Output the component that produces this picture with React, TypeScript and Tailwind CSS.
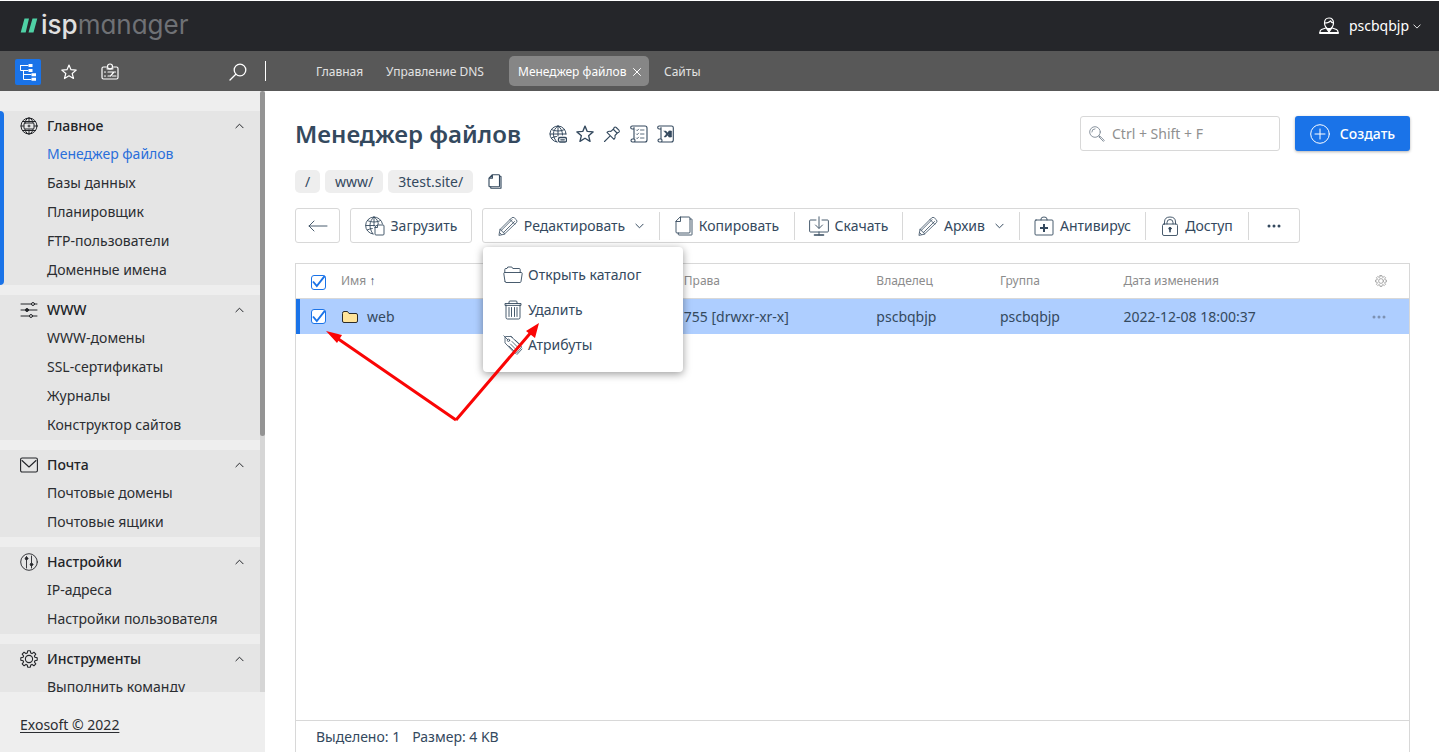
import type { ReactNode } from "react";

type IconProps = { children: ReactNode; box: string; className?: string; weight?: number };

function Icon({ children, box, className = "", weight = 1 }: IconProps) {
  return (
    <svg
      viewBox={box}
      className={"shrink-0 " + className}
      fill="none"
      stroke="currentColor"
      strokeWidth={weight}
      strokeLinecap="round"
      strokeLinejoin="round"
      aria-hidden="true"
    >
      {children}
    </svg>
  );
}

const TreeIcon = () => (
  <Icon box="0 0 18 18" className="size-[18px]">
    <path d="M1.500 2.500H9M1.500 2.500v5H9M4.500 7.500v9H12M4.500 11.500H12" />
    <path d="M9.500 1h4v3h-4zM9.500 6h4v3h-4zM12.500 10.200h4.500v3h-4.500zM12.500 14.700h4.500v3h-4.500z" fill="currentColor" stroke="none" />
  </Icon>
);

const StarIcon = ({ className }: { className: string }) => (
  <Icon box="0 0 16 16" className={className} weight={1.2}>
    <path d="M8 1l2 4.700 5.200.4-4 3.400 1.300 5L8 11.800l-4.500 2.700 1.300-5-4-3.400 5.200-.4z" />
  </Icon>
);

const BoardIcon = () => (
  <Icon box="0 0 18 18" className="size-[18px]" weight={1.2}>
    <path d="M5.500 4H2.500Q1 4 1 5.500v9Q1 16 2.500 16h13q1.500 0 1.500-1.500v-9Q17 4 15.500 4h-3" />
    <path d="M6 5.800h6" />
    <circle cx="9" cy="3.500" r="2.500" />
    <path d="M3.500 9h1M7 9h7.500M3.500 13h1M7 13h2.500M11.500 13H15M9.500 13l3-3.500" />
  </Icon>
);

const SearchIcon = ({ className }: { className: string }) => (
  <Icon box="0 0 18 18" className={className} weight={1.3}>
    <circle cx="11" cy="7" r="5.800" />
    <path d="M6.800 11.200L1 17" />
  </Icon>
);

const FinderIcon = () => (
  <Icon box="0 0 16 16" className="size-4" weight={0.9}>
    <circle cx="6" cy="6" r="5.300" />
    <path d="M2.800 6A3.200 3.200 0 0 1 6 2.800M9.800 9.800l1.200 1.200M11 10.200l4.300 4.200-.9 1-4.300-4.300z" />
  </Icon>
);

const UserIcon = () => (
  <Icon box="0 0 20 18" className="h-[18px] w-5" weight={1.2}>
    <path d="M10 1C7 1 5.500 3 5.500 6c0 3 2 6 4.500 6s4.500-3 4.500-6c0-3-1.500-5-4.500-5z" />
    <path d="M5.500 6C8 6 10.500 5.200 11.500 3.800 12 5 13 6 14.500 6M7.500 10.800L2.500 12.500Q1 13.200 1 15v1h18v-1q0-1.800-1.500-2.500l-5-1.700" />
    <path d="M1 16h18" strokeWidth="1.800" />
    <path d="M7.500 11.500L10 15l2.500-3.500z" fill="currentColor" />
  </Icon>
);

const Chevron = ({ up = false, className }: { up?: boolean; className: string }) => (
  <Icon box="0 0 10 6" className={className} weight={1.1}>
    {up ? <path d="M1 5l4-4 4 4" /> : <path d="M1 1l4 4 4-4" />}
  </Icon>
);

const GlobeDeskIcon = () => (
  <Icon box="0 0 18 18" className="size-[18px]">
    <circle cx="9" cy="9" r="8" />
    <ellipse cx="9" cy="9" rx="4.500" ry="8" />
    <path d="M2.500 4.500h13M2.500 13.500h13M9 1v4M9 13v4M1 9h2.500M14.500 9H17" />
    <rect x="4" y="6" width="10" height="6" rx="1" fill="#e5e5e5" />
    <path d="M9 8v2M8 9h2" />
  </Icon>
);

const SlidersIcon = () => (
  <Icon box="0 0 18 18" className="size-[18px]">
    <path d="M1 3h10.500M14.500 3H17M1 9h16M1 15h8.500M12.500 15H17" />
    <circle cx="13" cy="3" r="1.500" />
    <circle cx="7" cy="9" r="1.500" fill="currentColor" />
    <circle cx="11" cy="15" r="1.500" />
  </Icon>
);

const MailIcon = () => (
  <Icon box="0 0 18 18" className="size-[18px]" weight={1.1}>
    <rect x="0.600" y="2" width="16.800" height="14" rx="1.500" />
    <path d="M2 4.500L9 11l7-6.500" />
  </Icon>
);

const TuneIcon = () => (
  <Icon box="0 0 18 18" className="size-[18px]" weight={0.9}>
    <circle cx="9" cy="9" r="8.300" />
    <path d="M6.500 3.500v11.500M11.500 3v7M11.500 12.500v2.500" />
    <circle cx="6.500" cy="5.500" r="1.300" fill="currentColor" />
    <circle cx="11.500" cy="11.500" r="1.300" fill="currentColor" />
  </Icon>
);

const GearIcon = ({ className }: { className: string }) => (
  <Icon box="0 0 18 18" className={className} weight={1.1}>
    <path d="M7.700.800h2.600l.5 2.300 1.200.5 1.900-1.400 1.900 1.900-1.400 1.900.5 1.200 2.300.5v2.600l-2.300.5-.5 1.200 1.400 1.900-1.900 1.900-1.900-1.400-1.200.5-.5 2.300H7.700l-.5-2.300-1.200-.5-1.900 1.400-1.900-1.900L3.600 12l-.5-1.200-2.300-.5V7.700l2.300-.5.5-1.200-1.400-1.900 1.900-1.900L6 3.600l1.200-.5z" />
    <circle cx="9" cy="9" r="3.600" />
  </Icon>
);

const GlobeLinkIcon = () => (
  <Icon box="0 0 18 18" className="size-[18px]">
    <path d="M8 17A8 8 0 1 1 17 9M9 1C3 5 3 12 8 17M9 1c3 2 4.500 5 4.500 9M9 1v10M1 9h16M2.500 4.500C6 6.500 12 6.500 15.500 4.500M2.500 13q2.500-1.500 5-1.500" />
    <rect x="9.500" y="12.500" width="8" height="4.500" rx="1.500" strokeWidth="1.300" />
    <path d="M11.800 14.800h3.500" strokeWidth="1.300" />
  </Icon>
);

const PinIcon = () => (
  <Icon box="0 0 18 18" className="size-[18px]" weight={1.1}>
    <path d="M11.200 2.500q1-1 2 0l2.700 2.700q1 1 0 2l-1.200.5-2.700 2.800q.6 2.500-1 3.900L4 7.400q1.400-1.600 3.900-1l2.600-2.400zM7.200 10.800l-5.700 5.700" />
    <path d="M10.500 4.500l3.500 3.500" />
  </Icon>
);

const ScrollIcon = () => (
  <Icon box="0 0 18 18" className="size-[18px]" weight={1.1}>
    <path d="M4 14V2.500M3.800 4H2.200a1.500 1.500 0 1 1 0-3H15q2 0 2 2v12q0 2-2 2H2.500a1.500 1.500 0 1 1 0-3H4q1 0 1 1.500T4 17" />
    <path d="M6.500 5l.7.700 1.300-1.500M10.500 5H14M6.500 9l.7.700 1.300-1.500M10.500 9H14M6.500 13l.7.700 1.300-1.500M10.500 13H14" strokeWidth="0.800" />
  </Icon>
);

const ExcelIcon = () => (
  <Icon box="0 0 18 18" className="size-[18px]" weight={1.1}>
    <path d="M4 14V2.500M3.800 4H2.200a1.500 1.500 0 1 1 0-3H14.500q1.800 0 1.800 1.800V15q0 2-2 2H2.500a1.500 1.500 0 1 1 0-3H4q1 0 1 1.500T4 17" />
    <path d="M7 6h2l1.400 1.700L12 6h2l-2.600 3L14 12h-2l-1.600-1.700L9 12H7l2.400-3zM12 6h2.700v6H12" fill="currentColor" strokeWidth="0.400" />
  </Icon>
);

const CopyIcon = ({ className, weight = 0.9 }: { className: string; weight?: number }) => (
  <Icon box="0 0 18 20" className={className} weight={weight}>
    <path d="M5.500 1H14q1 0 1 1v14q0 1-1 1H2q-1 0-1-1V5.500zM5.500 1v4.500H1" />
    <path d="M15 3h1.500q.5 0 .5.500v15q0 .5-.5.500H4q-.7 0-.7-.7V17" />
  </Icon>
);

const BackIcon = () => (
  <Icon box="0 0 20 12" className="h-3 w-5" weight={0.9}>
    <path d="M1 6h18M6 1L1 6l5 5" />
  </Icon>
);

const UploadIcon = () => (
  <Icon box="0 0 20 20" className="size-5" weight={0.9}>
    <path d="M8 18A8.500 8.500 0 1 1 17.500 8M9 1C4 5 3.500 12 8 18M9 1c3 2 4 4 4.300 7M9 1v9M.8 9.500H10M2.500 4.500C6 6.500 12 6.500 15.500 4.500M2.300 14q2.700-1.500 5-1.500" />
    <path d="M12.500 9H18q1 0 1 1v8q0 1-1 1h-7q-1 0-1-1v-6.500zM12.500 9v2.500H10" />
  </Icon>
);

const PencilIcon = () => (
  <Icon box="0 0 20 20" className="size-5" weight={0.8}>
    <path d="M1 19l1-5.500L13.500 2q1.500-1.500 3 0L18.300 3.700q1.400 1.500 0 3L6.500 18zM2 13.500l1.500.7.700 1.500 1.500.6.800 1.700M3.500 14.200L14 3.700M5.700 16.300L16.500 5.500M12 3.500l4.700 4.700M1.700 16.700l1.600 1.600" />
  </Icon>
);

const DownloadIcon = () => (
  <Icon box="0 0 20 20" className="size-5" weight={0.9}>
    <path d="M7 4H1.500Q.6 4 .6 5v10q0 1 .9 1h17q.9 0 .9-1V5q0-1-.9-1H13M10 .8V12M6.500 9l3.500 3.500L13.500 9M10 16v3" />
    <path d="M5.500 19h9" strokeWidth="1.600" />
  </Icon>
);

const MedkitIcon = () => (
  <Icon box="0 0 20 20" className="size-5" weight={0.9}>
    <path d="M7 4V3q0-2 3-2t3 2v1" />
    <rect x="1" y="4" width="18" height="15" rx="1" />
    <path d="M10 8v8M6 12h8" strokeWidth="2" strokeLinecap="butt" />
  </Icon>
);

const LockIcon = () => (
  <Icon box="0 0 18 20" className="h-5 w-[18px]" weight={0.9}>
    <rect x="1.500" y="8" width="15" height="11.500" rx="1.500" />
    <path d="M3.500 8V6q0-5 5.500-5t5.500 5v2M6 8V6.500Q6 3.500 9 3.500t3 3V8" />
    <path d="M9 12.500v3.200" strokeWidth="1.600" />
    <circle cx="9" cy="12.500" r="1.200" fill="currentColor" />
  </Icon>
);

const OpenFolderIcon = () => (
  <Icon box="0 0 20 18" className="h-[18px] w-5" weight={0.9}>
    <path d="M2 15.500L.8 7.500q0-1 1-1h16.400q1 0 1 1L18 15.500q-.2 1-1 1H3q-.8 0-1-1M1.800 6.500V3.500q0-1 1-1H4l.8-1.500h4l1 1.500h6.400q1 0 1 1v3" />
  </Icon>
);

const TrashIcon = () => (
  <Icon box="0 0 18 20" className="h-5 w-[18px]" weight={0.9}>
    <path d="M1 5V3.500h16V5zM5 3.500V2q0-1 1-1h6q1 0 1 1v1.500M2 5v12.500Q2 19 3.500 19h11q1.500 0 1.500-1.500V5M5 7.500v9M7.500 7.500v9M10.500 7.500v9M13 7.500v9" />
  </Icon>
);

const TagIcon = () => (
  <Icon box="0 0 20 20" className="size-5" weight={0.8}>
    <path d="M.8.800l4 4M2 7.500V2.500q0-1 1-1h5L18 11q1 1 0 2l-4.500 5q-1 1-2 0zM8 1.500l1.500 1" />
    <circle cx="5.500" cy="5.300" r="1.200" />
    <path d="M9 6.500l5.500 5.500M7.500 9l5 5M6 11l5 5M12 5l5.500 5M19 14l-5 5.500" />
  </Icon>
);

const PlusCircleIcon = () => (
  <Icon box="0 0 20 20" className="size-5">
    <circle cx="10" cy="10" r="9.300" />
    <path d="M10 5v10M5 10h10" />
  </Icon>
);

const FolderIcon = () => (
  <svg viewBox="0 0 18 16" className="h-4 w-[18px] shrink-0" fill="#ffe49b" stroke="#2b2b2b" strokeWidth="1" aria-hidden="true">
    <path d="M1.500 4.500q0-2 1.500-2h3.500l1.500 2h7q1.500 0 1.500 1.500v6q0 1.500-1.500 1.500H3q-1.500 0-1.500-1.500z" />
  </svg>
);

const Dots = () => (
  <svg viewBox="0 0 16 4" className="h-1 w-4" fill="currentColor" aria-hidden="true">
    <circle cx="3" cy="2" r="1.500" />
    <circle cx="8" cy="2" r="1.500" />
    <circle cx="13" cy="2" r="1.500" />
  </svg>
);

const sections = [
  { title: "Главное", icon: <GlobeDeskIcon />, active: true, items: ["Менеджер файлов", "Базы данных", "Планировщик", "FTP-пользователи", "Доменные имена"] },
  { title: "WWW", icon: <SlidersIcon />, active: false, items: ["WWW-домены", "SSL-сертификаты", "Журналы", "Конструктор сайтов"] },
  { title: "Почта", icon: <MailIcon />, active: false, items: ["Почтовые домены", "Почтовые ящики"] },
  { title: "Настройки", icon: <TuneIcon />, active: false, items: ["IP-адреса", "Настройки пользователя"] },
  { title: "Инструменты", icon: <GearIcon className="size-[18px]" />, active: false, items: ["Выполнить команду"] },
];

function Sidebar() {
  return (
    <aside className="flex w-[265px] shrink-0 flex-col bg-[#eeeeee] text-[#2b2d31]">
      <div className="flex min-h-0 flex-1">
        <nav className="flex flex-1 flex-col gap-2.5 overflow-hidden pt-5">
          {sections.map((s) => (
            <section key={s.title} className="flex shrink-0 bg-[#e5e5e5]">
              <span className={s.active ? "w-1 rounded-r bg-[#1a73e8]" : "w-1"} />
              <div className="flex-1 pb-px pl-4">
                <button className="flex h-7 w-full items-center pr-4 pt-px text-left font-medium text-[#222428]">
                  <span className="w-[27px]">{s.icon}</span>
                  <span className="flex-1">{s.title}</span>
                  <Chevron up className="h-[6px] w-[9px]" />
                </button>
                <ul>
                  {s.items.map((item, i) => (
                    <li key={item} className="flex h-[29px] items-center pl-[27px]">
                      <a href="#" className={s.active && i === 0 ? "text-[#2a6fdb]" : ""}>{item}</a>
                    </li>
                  ))}
                </ul>
              </div>
            </section>
          ))}
        </nav>
        <div className="w-[5px] bg-[#d6d6d6]">
          <div className="h-[57.4%] rounded-full bg-[#949494]" />
        </div>
      </div>
      <div className="flex h-[60px] items-center px-5 pt-1.5">
        <a href="#" className="underline underline-offset-2">Exosoft © 2022</a>
      </div>
    </aside>
  );
}

function Tick({ label }: { label: string }) {
  return (
    <span className="grid size-4 place-items-center">
      <input type="checkbox" aria-label={label} defaultChecked className="peer col-start-1 row-start-1 size-[15px] appearance-none rounded-[3px] border border-[#1a73e8] bg-white" />
      <svg viewBox="0 0 16 16" className="pointer-events-none invisible col-start-1 row-start-1 size-4 peer-checked:visible" fill="none" stroke="#1a73e8" strokeWidth="1.900" aria-hidden="true">
        <path d="M3 7.500l3.800 4.500L14.800 1.800" />
      </svg>
    </span>
  );
}

const tool = "flex h-full items-center justify-center gap-1.5";

function Toolbar() {
  return (
    <div className="mt-[15px] flex h-[35px] gap-2.5 text-[#34495e]">
      <button aria-label="Назад" className="flex w-[45px] items-center justify-center rounded-[3px] border border-[#d8d8d8]">
        <BackIcon />
      </button>
      <button className="flex w-[122px] items-center justify-center gap-1.5 rounded-[3px] border border-[#d8d8d8]">
        <UploadIcon />
        Загрузить
      </button>
      <div className="flex items-center rounded-[3px] border border-[#d8d8d8]">
        <div className="relative h-full">
          <button className={tool + " w-[176px]"}>
            <PencilIcon />
            Редактировать
            <Chevron className="ml-1 h-[6px] w-[9px]" />
          </button>
          <ul className="absolute left-0 top-full z-10 mt-[5px] w-[200px] rounded bg-white px-5 py-2.5 shadow-[0_2px_8px_rgba(0,0,0,0.4)]">
            <li><button className="flex h-[35px] w-full items-center gap-[5px]"><OpenFolderIcon />Открыть каталог</button></li>
            <li><button className="flex h-[35px] w-full items-center gap-[5px]"><span className="flex w-5 justify-center"><TrashIcon /></span>Удалить</button></li>
            <li><button className="flex h-[35px] w-full items-center gap-[5px]"><TagIcon />Атрибуты</button></li>
          </ul>
        </div>
        <span className="h-7 w-px bg-[#d8d8d8]" />
        <button className={tool + " w-[134px]"}><CopyIcon className="h-5 w-[18px]" />Копировать</button>
        <span className="h-7 w-px bg-[#d8d8d8]" />
        <button className={tool + " w-[107px]"}><DownloadIcon />Скачать</button>
        <span className="h-7 w-px bg-[#d8d8d8]" />
        <button className={tool + " w-[116px]"}><PencilIcon />Архив<Chevron className="ml-1 h-[6px] w-[9px]" /></button>
        <span className="h-7 w-px bg-[#d8d8d8]" />
        <button className={tool + " w-[125px]"}><MedkitIcon />Антивирус</button>
        <span className="h-7 w-px bg-[#d8d8d8]" />
        <button className={tool + " w-[102px]"}><LockIcon />Доступ</button>
        <span className="h-7 w-px bg-[#d8d8d8]" />
        <button aria-label="Ещё" className={tool + " w-[50px]"}><Dots /></button>
      </div>
    </div>
  );
}

function FileTable() {
  return (
    <div className="mt-5 flex min-h-0 flex-1 flex-col border border-b-0 border-[#d8d8d8]">
      <div className="flex-1">
        <table className="w-full table-fixed border-separate border-spacing-0 text-left">
          <colgroup>
            <col className="w-[45px]" />
            <col className="w-[30.8%]" />
            <col className="w-[17.3%]" />
            <col className="w-[11.1%]" />
            <col className="w-[11.1%]" />
            <col />
            <col className="w-[56px]" />
          </colgroup>
          <thead className="text-[12px] text-[#8c8c8c] [&_th]:border-b [&_th]:border-[#d8d8d8]">
            <tr className="h-[35px]">
              <th className="pl-3.5 pt-0.5"><Tick label="Выбрать все" /></th>
              <th className="font-normal">Имя <span className="text-[#34495e]">↑</span></th>
              <th className="font-normal">Права</th>
              <th className="font-normal">Владелец</th>
              <th className="font-normal">Группа</th>
              <th className="font-normal">Дата изменения</th>
              <th><button aria-label="Настройка таблицы" className="flex w-full justify-center"><GearIcon className="size-3" /></button></th>
            </tr>
          </thead>
          <tbody className="text-[#34495e]">
            <tr className="h-[35px] bg-[#aeceff]">
              <td className="border-l-4 border-[#1a73e8] pl-2.5"><Tick label="Выбрать web" /></td>
              <td><a href="#" className="flex items-center gap-2"><FolderIcon />web</a></td>
              <td>755 [drwxr-xr-x]</td>
              <td>pscbqbjp</td>
              <td>pscbqbjp</td>
              <td>2022-12-08 18:00:37</td>
              <td><button aria-label="Действия" className="flex w-full justify-center pr-1 text-[#7d92b3]"><Dots /></button></td>
            </tr>
          </tbody>
        </table>
      </div>
      <div className="flex h-8 shrink-0 items-center gap-3 border-t border-[#d8d8d8] px-5 text-[#34495e]">
        <span>Выделено: 1</span>
        <span>Размер: 4 KB</span>
      </div>
    </div>
  );
}

export default function App() {
  return (
    <div className="flex h-screen flex-col overflow-hidden bg-white pt-px font-['Noto_Sans','Open_Sans',sans-serif] text-[14px] leading-5">
      <header className="flex h-[50px] shrink-0 items-center justify-between bg-[#25262a] pl-5 pr-[18px]">
        <a href="#" className="flex items-center gap-[3px] pb-0.5 font-['Inter',sans-serif] text-[26px] leading-8 [font-feature-settings:'cv11']">
          <svg viewBox="0 0 18 16" className="h-4 w-[18px]" fill="#4fd1a5" aria-hidden="true">
            <path d="M4.500 1.500H9L5.700 15.500H.7zM12.500 1.500H17.300L13.500 15.500H8.500z" />
          </svg>
          <span><span className="font-medium text-[#e0e0e0]">isp</span><span className="font-normal text-[#6f7175]">manager</span></span>
        </a>
        <button className="flex items-center text-white">
          <UserIcon />
          <span className="ml-2.5">pscbqbjp</span>
          <Chevron className="ml-1 h-[5px] w-[8px]" />
        </button>
      </header>

      <div className="flex h-10 shrink-0 items-center bg-[#585858] text-white">
        <div className="flex w-[265px] items-center pl-[15px] pt-px">
          <button aria-label="Меню" className="flex size-[26px] items-center justify-center rounded-[2px] bg-[#1a73e8]"><TreeIcon /></button>
          <button aria-label="Избранное" className="ml-5"><StarIcon className="size-4" /></button>
          <button aria-label="Панель" className="ml-6"><BoardIcon /></button>
          <button aria-label="Поиск" className="ml-auto mr-[18px]"><SearchIcon className="size-[18px]" /></button>
        </div>
        <span className="h-5 w-px bg-white" />
        <nav className="flex items-center pl-[50px] text-[12px] text-[#e2e2e2]">
          <a href="#" className="w-[70px] pt-0.5">Главная</a>
          <a href="#" className="w-[123px] pt-0.5">Управление DNS</a>
          <span className="flex h-[30px] w-[140px] items-center justify-between rounded-[5px] bg-[#868686] pl-[9px] pr-2 pt-0.5 text-white">
            <a href="#">Менеджер файлов</a>
            <button aria-label="Закрыть">
              <Icon box="0 0 8 8" className="size-2"><path d="M.5.500l7 7M7.500.500l-7 7" /></Icon>
            </button>
          </span>
          <a href="#" className="ml-[15px] pt-0.5">Сайты</a>
        </nav>
      </div>

      <div className="flex min-h-0 flex-1">
        <Sidebar />
        <main className="relative flex min-w-0 flex-1 flex-col pl-[30px] pr-[29px] pt-[25px]">
          <div className="flex h-[35px] items-center">
            <h1 className="text-[24px] font-semibold leading-8 text-[#34495e]">Менеджер файлов</h1>
            <div className="ml-7 flex items-center gap-[9px] text-[#34495e]">
              <button aria-label="Ссылка"><GlobeLinkIcon /></button>
              <button aria-label="В избранное"><StarIcon className="size-[18px]" /></button>
              <button aria-label="Закрепить"><PinIcon /></button>
              <button aria-label="Список"><ScrollIcon /></button>
              <button aria-label="Экспорт"><ExcelIcon /></button>
            </div>
            <label className="ml-auto flex h-[35px] w-[200px] items-center gap-[7px] rounded-[3px] border border-[#d8d8d8] px-2 text-[#7d8894]">
              <FinderIcon />
              <input type="text" aria-label="Поиск по списку" placeholder="Ctrl + Shift + F" className="w-full min-w-0 bg-transparent outline-none placeholder:text-[#909090]" />
            </label>
            <button className="ml-[15px] flex h-[35px] w-[115px] items-center justify-center gap-2.5 rounded-[3px] bg-[#1a73e8] font-medium text-white shadow-[0_1px_3px_rgba(0,0,0,0.3)]">
              <PlusCircleIcon />
              Создать
            </button>
          </div>

          <nav className="mt-[19px] flex h-[23px] items-center gap-[5px] text-[#34495e]">
            <a href="#" className="flex h-full w-[25px] items-center justify-center rounded-[5px] bg-[#eeeeee]">/</a>
            <a href="#" className="flex h-full items-center rounded-[5px] bg-[#eeeeee] px-2.5">www/</a>
            <a href="#" className="flex h-full items-center rounded-[5px] bg-[#eeeeee] px-2.5">3test.site/</a>
            <button aria-label="Копировать путь" className="ml-2.5"><CopyIcon className="h-[15px] w-[14px]" weight={1.5} /></button>
          </nav>

          <Toolbar />
          <FileTable />

          <svg viewBox="0 0 220 100" className="pointer-events-none absolute left-[60px] top-[232px] z-20 h-[100px] w-[220px]" fill="#fa0505" aria-hidden="true">
            <path d="M131 97L9 13M131 97L208 7" stroke="#fa0505" strokeWidth="3" fill="none" />
            <path d="M1 8l16 4-5 8zM214 0l-4 15-9-7z" />
          </svg>
        </main>
      </div>
    </div>
  );
}
